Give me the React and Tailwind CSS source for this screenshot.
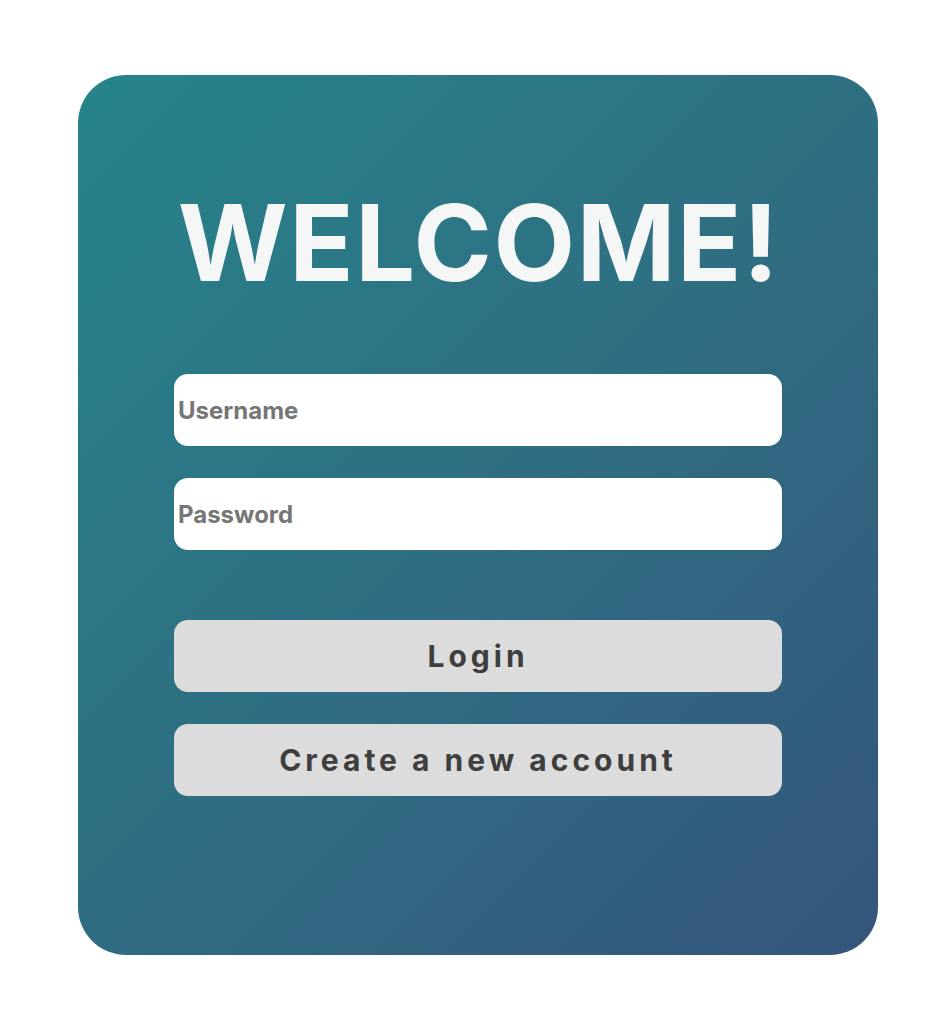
export default function App() {
  return (
    <div className="min-h-[1018px] w-[930px] bg-white pl-[78px] pt-[75px]" style={{ fontFamily: "Inter, 'Noto Sans', sans-serif" }}>
      <div className="flex h-[880px] w-[800px] flex-col items-center rounded-[48px] bg-[linear-gradient(135deg,#26848a_0%,#2f6e82_50%,#34557b_100%)] pt-[115px]">
        <h1 className="pl-[2px] text-[106px] font-bold leading-none tracking-[1.5px] text-[#f5f6f6]">WELCOME!</h1>
        <div className="mt-[78px] flex w-[608px] flex-col gap-[32px]">
          <input
            className="h-[72px] w-full rounded-[14px] bg-white pl-[4px] text-[24px] font-bold text-[#767676] outline-none placeholder:text-[#767676]"
            placeholder="Username"
          />
          <input
            type="password"
            className="h-[72px] w-full rounded-[14px] bg-white pl-[4px] text-[24px] font-bold text-[#767676] outline-none placeholder:text-[#767676]"
            placeholder="Password"
          />
        </div>
        <div className="mt-[70px] flex w-[608px] flex-col gap-[32px]">
          <button className="h-[72px] w-full rounded-[14px] bg-[#dcdcdc] text-[30px] font-bold tracking-[4px] text-[#3e3e3e]">Login</button>
          <button className="h-[72px] w-full rounded-[14px] bg-[#dcdcdc] text-[30px] font-bold tracking-[4px] text-[#3e3e3e]">Create a new account</button>
        </div>
      </div>
    </div>
  );
}
